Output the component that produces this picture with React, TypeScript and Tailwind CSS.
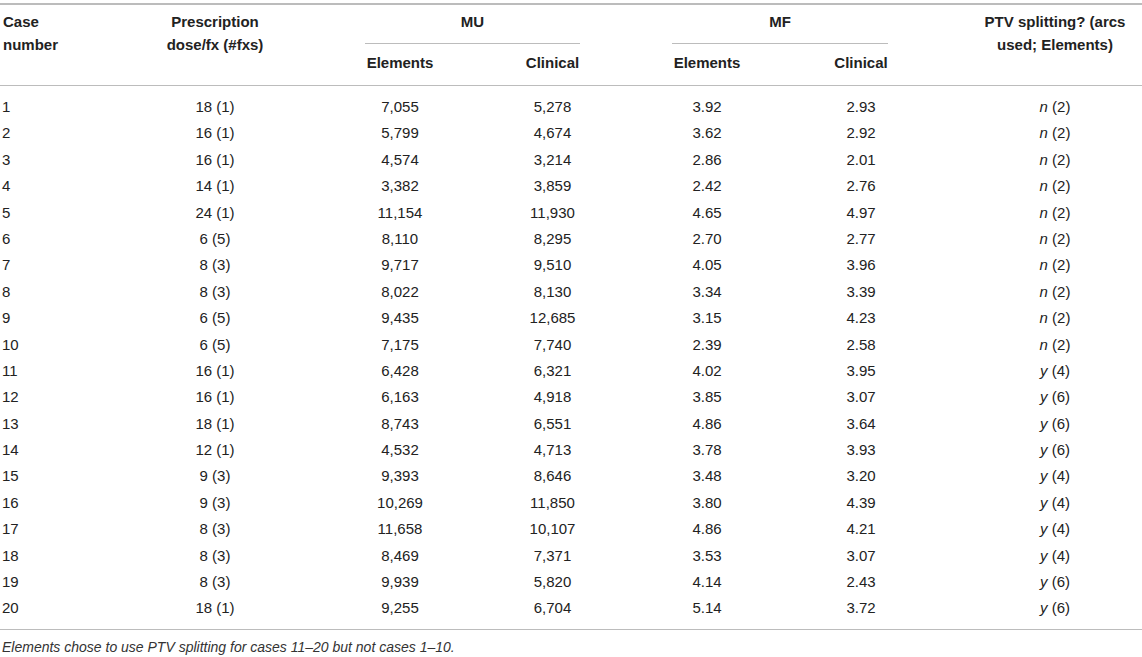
import React from 'react';

type Row = [string, string, string, string, string, string, string, string];

// case, dose, MU elements, MU clinical, MF elements, MF clinical, split flag, arcs
const rows: Row[] = [
  ['1', '18 (1)', '7,055', '5,278', '3.92', '2.93', 'n', '(2)'],
  ['2', '16 (1)', '5,799', '4,674', '3.62', '2.92', 'n', '(2)'],
  ['3', '16 (1)', '4,574', '3,214', '2.86', '2.01', 'n', '(2)'],
  ['4', '14 (1)', '3,382', '3,859', '2.42', '2.76', 'n', '(2)'],
  ['5', '24 (1)', '11,154', '11,930', '4.65', '4.97', 'n', '(2)'],
  ['6', '6 (5)', '8,110', '8,295', '2.70', '2.77', 'n', '(2)'],
  ['7', '8 (3)', '9,717', '9,510', '4.05', '3.96', 'n', '(2)'],
  ['8', '8 (3)', '8,022', '8,130', '3.34', '3.39', 'n', '(2)'],
  ['9', '6 (5)', '9,435', '12,685', '3.15', '4.23', 'n', '(2)'],
  ['10', '6 (5)', '7,175', '7,740', '2.39', '2.58', 'n', '(2)'],
  ['11', '16 (1)', '6,428', '6,321', '4.02', '3.95', 'y', '(4)'],
  ['12', '16 (1)', '6,163', '4,918', '3.85', '3.07', 'y', '(6)'],
  ['13', '18 (1)', '8,743', '6,551', '4.86', '3.64', 'y', '(6)'],
  ['14', '12 (1)', '4,532', '4,713', '3.78', '3.93', 'y', '(6)'],
  ['15', '9 (3)', '9,393', '8,646', '3.48', '3.20', 'y', '(4)'],
  ['16', '9 (3)', '10,269', '11,850', '3.80', '4.39', 'y', '(4)'],
  ['17', '8 (3)', '11,658', '10,107', '4.86', '4.21', 'y', '(4)'],
  ['18', '8 (3)', '8,469', '7,371', '3.53', '3.07', 'y', '(4)'],
  ['19', '8 (3)', '9,939', '5,820', '4.14', '2.43', 'y', '(6)'],
  ['20', '18 (1)', '9,255', '6,704', '5.14', '3.72', 'y', '(6)'],
];

const cols = 'grid grid-cols-[130px_170px_200px_105px_204px_104px_1fr]';

export default function App() {
  return (
    <div
      className="w-[1142px] bg-white text-[#222] pt-[3px]"
      style={{ fontFamily: '"Liberation Sans", Arial, Helvetica, sans-serif' }}
    >
      {/* header */}
      <div className="border-t-2 border-[#bcbcbc] border-b border-b-[#bcbcbc] pt-[5px]">
        <div className={`${cols} text-[15px] leading-[23px] font-bold`}>
          <div className="row-span-2 pl-[3px]">
            Case
            <br />
            number
          </div>
          <div className="row-span-2 text-center">
            Prescription
            <br />
            dose/fx (#fxs)
          </div>
          <div className="col-span-2">
            <div className="ml-[65px] mr-[25px] pb-[10px] border-b border-[#bcbcbc] text-center">MU</div>
          </div>
          <div className="col-span-2">
            <div className="ml-[67px] mr-[25px] pb-[10px] border-b border-[#bcbcbc] text-center">MF</div>
          </div>
          <div className="row-span-2 pl-[55px] text-center">
            PTV splitting? (arcs
            <br />
            used; Elements)
          </div>
          <div className="pt-[7px] pb-[11px] text-center">Elements</div>
          <div className="pt-[7px] pb-[11px] text-center">Clinical</div>
          <div className="pt-[7px] pb-[11px] text-center">Elements</div>
          <div className="pt-[7px] pb-[11px] text-center">Clinical</div>
        </div>
      </div>

      {/* body */}
      <div className="border-b border-[#bcbcbc] pt-[8px] pb-[7px] text-[15px]">
        {rows.map((r) => (
          <div key={r[0]} className={`${cols} h-[26.4px] leading-[26.4px]`}>
            <div className="pl-[2px]">{r[0]}</div>
            <div className="text-center">{r[1]}</div>
            <div className="text-center">{r[2]}</div>
            <div className="text-center">{r[3]}</div>
            <div className="text-center">{r[4]}</div>
            <div className="text-center">{r[5]}</div>
            <div className="pl-[55px] text-center">
              <span className="italic">{r[6]}</span> {r[7]}
            </div>
          </div>
        ))}
      </div>

      <p className="pt-[7px] pl-[2px] text-[14px] leading-[20px] italic text-[#333]">
        Elements chose to use PTV splitting for cases 11–20 but not cases 1–10.
      </p>
    </div>
  );
}
